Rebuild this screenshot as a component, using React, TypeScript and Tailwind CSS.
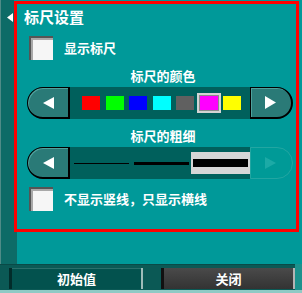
import React from "react";

const FONT = { fontFamily: '"Noto Sans CJK SC", "Noto Sans", sans-serif' };

function LeftBtn() {
  return (
    <div className="w-[43px] h-[32px] shrink-0 rounded-l-[16px] border border-black border-r-2 border-b-2 bg-[#2a7a77] shadow-[inset_1px_1px_0_#4fa19d] flex items-center">
      <svg width="12" height="12" viewBox="0 0 12 12" className="ml-[15px]">
        <polygon points="0,6 11,0 11,12" fill="#ffffff" />
      </svg>
    </div>
  );
}

function RightBtn({ disabled }: { disabled?: boolean }) {
  if (disabled) {
    return (
      <div className="w-[43px] h-[32px] shrink-0 rounded-r-[16px] border border-[#22a6a2] bg-[#009a97] flex items-center">
        <svg width="12" height="12" viewBox="0 0 12 12" className="ml-[14px]">
          <polygon points="0,0 11,6 0,12" fill="#1caaa6" />
        </svg>
      </div>
    );
  }
  return (
    <div className="w-[43px] h-[32px] shrink-0 rounded-r-[16px] border border-black border-r-2 border-b-2 bg-[#2a7a77] shadow-[inset_1px_1px_0_#4fa19d] flex items-center">
      <svg width="12" height="13" viewBox="0 0 12 13" className="ml-[14px]">
        <polygon points="0,0 11,6.5 0,13" fill="#ffffff" />
      </svg>
    </div>
  );
}

function CheckBox() {
  return (
    <div className="w-[24px] h-[24px] shrink-0 bg-[#f6f6f6] shadow-[inset_2px_2px_0_#555555,inset_4px_4px_0_#a8a8a8]" />
  );
}

export default function App() {
  const colors = ["#ff0000", "#00ff00", "#0000ff", "#00ffff", "#606060", "#ff00ff", "#ffff00"];
  return (
    <div className="w-[302px] h-[293px] bg-[#009999] flex flex-col overflow-hidden text-white" style={FONT}>
      <div className="flex h-[264px]">
        <div className="w-[14px] shrink-0 bg-[#0d6b67] border-l border-[#4f8b87] flex flex-col">
          <svg width="7" height="9" viewBox="0 0 7 9" className="ml-[6px] mt-[13px]">
            <polygon points="0,4.5 6,0 6,9" fill="#ffffff" />
          </svg>
        </div>
        <div className="flex flex-col flex-1 pt-[1px]">
          <div className="w-[285px] h-[231px] border-[3px] border-[#ff0000] flex flex-col">
            <div className="pl-[7px] pt-[3px] text-[15px] leading-[20px] font-bold">标尺设置</div>
            <div className="flex items-center ml-[12px] mt-[9px] gap-[11px]">
              <CheckBox />
              <span className="text-[13px] leading-[18px] font-bold">显示标尺</span>
            </div>
            <div className="ml-[10px] w-[267px] mt-[7px] pl-[5px] text-center text-[13px] leading-[18px] font-bold">标尺的颜色</div>
            <div className="ml-[10px] mt-[2px] flex w-[267px]">
              <LeftBtn />
              <div className="w-[180px] h-[32px] bg-[#00605c] flex items-center pl-[12px] gap-[5.5px]">
                {colors.map((c, i) =>
                  i === 5 ? (
                    <div key={i} className="w-[18px] h-[14px] shadow-[0_0_0_1px_#8a8a8a,0_0_0_3px_#d4d4d4]" style={{ backgroundColor: c }} />
                  ) : (
                    <div key={i} className="w-[18px] h-[14px]" style={{ backgroundColor: c }} />
                  )
                )}
              </div>
              <RightBtn />
            </div>
            <div className="ml-[10px] w-[267px] mt-[8px] pl-[5px] text-center text-[13px] leading-[18px] font-bold">标尺的粗细</div>
            <div className="ml-[10px] mt-[2px] flex w-[267px]">
              <LeftBtn />
              <div className="w-[180px] h-[32px] bg-[#00605c] flex items-center pl-[4px]">
                <div className="w-[55px] h-[1px] bg-black" />
                <div className="w-[55px] h-[3px] bg-black ml-[5px]" />
                <div className="w-[59px] h-[22px] ml-[2px] bg-[#d6d6d6] flex items-center justify-center">
                  <div className="w-[55px] h-[8px] bg-black" />
                </div>
              </div>
              <RightBtn disabled />
            </div>
            <div className="flex items-center ml-[12px] mt-[8px] gap-[11px]">
              <CheckBox />
              <span className="text-[13px] leading-[18px] font-bold">不显示竖线，只显示横线</span>
            </div>
          </div>
          <div className="flex-1 -ml-[0px] border-l-[3px] border-[#0d6b67]" />
        </div>
      </div>
      <div className="h-[26px] flex bg-[#0b5955]">
        <div className="flex flex-1 pl-[9px] pt-[3px] pb-[2px] gap-[18px] border-t border-[#0a4a47]">
          <div className="w-[134px] h-[21px] bg-[#03524e] border-l-[3px] border-[#022c2a] border-r-2 border-r-[#9fbcb9] shadow-[inset_0_1px_0_#2a6f6b] flex items-center justify-center text-[13px] font-bold leading-none">初始值</div>
          <div className="w-[134px] h-[21px] bg-gradient-to-b from-[#4a4a4a] to-[#333333] border-l-[3px] border-[#111111] border-r-2 border-r-[#b4b4b4] flex items-center justify-center text-[13px] font-bold leading-none">关闭</div>
        </div>
        <div className="w-[7px] bg-[#1c928d]" />
      </div>
      <div className="h-[3px] bg-[#8fcac5]" />
    </div>
  );
}
